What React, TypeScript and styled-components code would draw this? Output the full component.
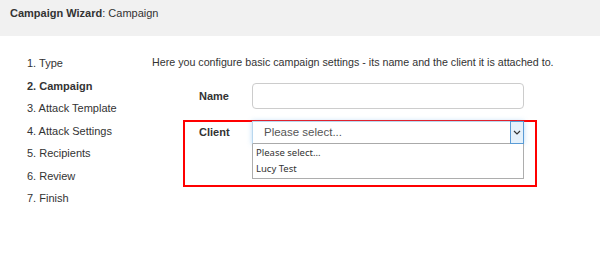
import React from "react";
import styled, { createGlobalStyle } from "styled-components";

const Global = createGlobalStyle`
  html, body { margin: 0; padding: 0; background: #fff; }
  body { font-family: "Liberation Sans", Arial, sans-serif; color: #333; }
`;

const Page = styled.div`
  width: 600px;
  height: 270px;
  overflow: hidden;
`;

const Header = styled.div`
  height: 36px;
  background: #f1f1f1;
  padding: 5px 0 0 10px;
  box-sizing: border-box;
  font-size: 11px;
  line-height: 16px;
  color: #333;
`;

const Strong = styled.span`
  font-weight: bold;
`;

const Body = styled.div`
  display: flex;
  padding-top: 16px;
`;

const Steps = styled.ol`
  list-style: none;
  margin: 0;
  padding: 0 0 0 27px;
  width: 152px;
  flex: none;
  box-sizing: border-box;
`;

const Step = styled.li<{ $active?: boolean }>`
  font-size: 11px;
  line-height: 22.5px;
  height: 22.5px;
  color: #333;
  font-weight: ${(p) => (p.$active ? "bold" : "normal")};
  white-space: nowrap;
`;

const Content = styled.div`
  display: flex;
  flex-direction: column;
  flex: 1;
`;

const Intro = styled.p`
  margin: 0;
  font-size: 10.7px;
  line-height: 20px;
  color: #333;
  white-space: nowrap;
`;

const Form = styled.div`
  margin: 10px 0 0 31px;
  width: 354px;
  display: flex;
  flex-direction: column;
`;

const Row = styled.div`
  display: flex;
  align-items: center;
  padding: 0 13px 0 16px;
  height: 26px;
  margin-top: 1px;
`;

const Label = styled.label`
  width: 53px;
  flex: none;
  font-size: 11px;
  font-weight: bold;
  color: #333;
`;

const TextInput = styled.div`
  width: 272px;
  height: 26px;
  box-sizing: border-box;
  border: 1px solid #ccc;
  border-radius: 4px;
  background: #fff;
`;

const Highlight = styled.div`
  margin-top: 11px;
  border: 2px solid #ff0000;
  padding: 0 11px 6px 14px;
  display: flex;
  align-items: flex-start;
`;

const ClientLabel = styled(Label)`
  line-height: 21px;
`;

const SelectWrap = styled.div`
  width: 272px;
  display: flex;
  flex-direction: column;
  margin-top: -1px;
`;

const SelectBox = styled.div`
  height: 23px;
  box-sizing: border-box;
  border: 1px solid #b9d7ee;
  border-bottom-color: #aaa;
  box-shadow: 0 0 5px rgba(102, 175, 233, 0.45);
  display: flex;
  align-items: stretch;
  background: #fff;
`;

const SelectText = styled.div`
  flex: 1;
  padding-left: 11px;
  font-size: 11.5px;
  line-height: 21px;
  color: #555;
`;

const ArrowButton = styled.div`
  width: 12px;
  margin: -1px -1px -1px 0;
  border: 1px solid #5a9bd5;
  background: #e5f1fb;
  display: flex;
  align-items: center;
  justify-content: center;
`;

const List = styled.div`
  border: 1px solid #adadad;
  border-top: none;
  background: #fff;
  padding: 1px 0 1px;
`;

const Option = styled.div`
  height: 16px;
  line-height: 16px;
  padding-left: 3px;
  font-family: "Noto Sans", "DejaVu Sans", sans-serif;
  font-size: 9.5px;
  color: #333;
`;

export default function App() {
  const steps = [
    "1. Type",
    "2. Campaign",
    "3. Attack Template",
    "4. Attack Settings",
    "5. Recipients",
    "6. Review",
    "7. Finish",
  ];
  return (
    <Page>
      <Global />
      <Header>
        <Strong>Campaign Wizard</Strong>: Campaign
      </Header>
      <Body>
        <Steps>
          {steps.map((s, i) => (
            <Step key={s} $active={i === 1}>
              {s}
            </Step>
          ))}
        </Steps>
        <Content>
          <Intro>
            Here you configure basic campaign settings - its name and the client it is attached to.
          </Intro>
          <Form>
            <Row>
              <Label>Name</Label>
              <TextInput />
            </Row>
            <Highlight>
              <ClientLabel>Client</ClientLabel>
              <SelectWrap>
                <SelectBox>
                  <SelectText>Please select...</SelectText>
                  <ArrowButton>
                    <svg width="8" height="5" viewBox="0 0 8 5">
                      <path d="M1 1 L4 4 L7 1" fill="none" stroke="#333" strokeWidth="1.2" />
                    </svg>
                  </ArrowButton>
                </SelectBox>
                <List>
                  <Option>Please select...</Option>
                  <Option>Lucy Test</Option>
                </List>
              </SelectWrap>
            </Highlight>
          </Form>
        </Content>
      </Body>
    </Page>
  );
}
